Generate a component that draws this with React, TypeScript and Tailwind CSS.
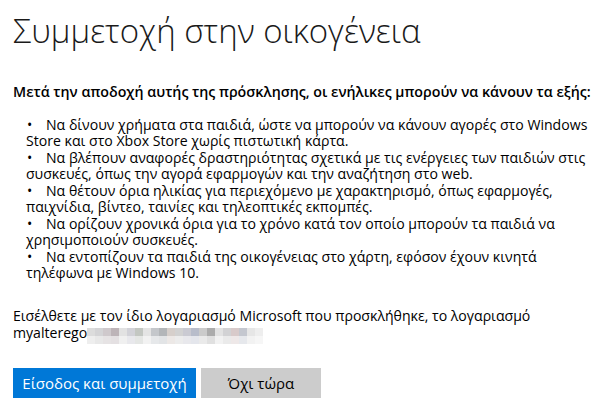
import React from "react";

const font = { fontFamily: '"Open Sans", "Noto Sans", sans-serif' };

const items: [string, string][] = [
  ["Να δίνουν χρήματα στα παιδιά, ώστε να μπορούν να κάνουν αγορές στο Windows", "Store και στο Xbox Store χωρίς πιστωτική κάρτα."],
  ["Να βλέπουν αναφορές δραστηριότητας σχετικά με τις ενέργειες των παιδιών στις", "συσκευές, όπως την αγορά εφαρμογών και την αναζήτηση στο web."],
  ["Να θέτουν όρια ηλικίας για περιεχόμενο με χαρακτηρισμό, όπως εφαρμογές,", "παιχνίδια, βίντεο, ταινίες και τηλεοπτικές εκπομπές."],
  ["Να ορίζουν χρονικά όρια για το χρόνο κατά τον οποίο μπορούν τα παιδιά να", "χρησιμοποιούν συσκευές."],
  ["Να εντοπίζουν τα παιδιά της οικογένειας στο χάρτη, εφόσον έχουν κινητά", "τηλέφωνα με Windows 10."],
];

const mosaic = [
  ["#dcdcdc", "#d4d4d6", "#cfc9cc", "#bdb4b8", "#e2e2e2", "#d2d2d8", "#c3c7c2", "#e4e4e4", "#c4c7cb", "#b3b6b9", "#d6cfcb", "#d2d2d2", "#cacad2", "#b8bdcb", "#cbcbcb", "#acacac", "#e2e2e2", "#d2d2d4", "#d8caca", "#c4c7cf", "#e6e6e6", "#eeeeee"],
  ["#eeeeee", "#e8e8e8", "#e6e3e4", "#e4e0e2", "#f0f0f0", "#e8e8ec", "#e4e6e4", "#f2f2f2", "#e6e8ea", "#e2e4e6", "#ece8e6", "#ececec", "#e8e8ec", "#e4e6ec", "#eaeaea", "#e0e0e0", "#f2f2f2", "#eaeaea", "#eee8e8", "#e6e8ec", "#f2f2f2", "#f6f6f6"],
];

export default function App() {
  return (
    <div className="w-[610px] h-[406px] bg-white text-black overflow-hidden pl-[13px]" style={font}>
      <h1 className="text-[33px] font-light leading-none pt-[14px] text-[#1a1a1a] whitespace-nowrap">
        Συμμετοχή στην οικογένεια
      </h1>
      <p className="mt-[36px] text-[14.25px] font-semibold leading-[17px] whitespace-nowrap">
        Μετά την αποδοχή αυτής της πρόσκλησης, οι ενήλικες μπορούν να κάνουν τα εξής:
      </p>
      <div className="mt-[16px] ml-[13px] text-[14.1px]">
        {items.map(([a, b], i) => (
          <div key={i} className="whitespace-nowrap">
            <div className="flex h-[17px] items-center">
              <span className="w-[20px] pl-[1px]">•</span>
              <span>{a}</span>
            </div>
            <div className="flex h-[16px] items-center">{b}</div>
          </div>
        ))}
      </div>
      <div className="mt-[26px] text-[14.1px] whitespace-nowrap">
        <div className="flex h-[17px] items-center">Εισέλθετε με τον ίδιο λογαριασμό Microsoft που προσκλήθηκε, το λογαριασμό</div>
        <div className="flex h-[17px] items-center">
          <span>myalterego</span>
          <span className="flex flex-col self-start mt-[4px]">
            {mosaic.map((row, r) => (
              <span key={r} className="flex">
                {row.map((c, k) => (
                  <span key={k} className="block w-[8px] h-[8px]" style={{ backgroundColor: c }} />
                ))}
              </span>
            ))}
          </span>
        </div>
      </div>
      <div className="mt-[27px] flex gap-[5px] text-[15px]">
        <button className="w-[183px] h-[30px] bg-[#0078d7] text-white leading-none">Είσοδος και συμμετοχή</button>
        <button className="w-[120px] h-[30px] bg-[#cccccc] text-black leading-none">Όχι τώρα</button>
      </div>
    </div>
  );
}
